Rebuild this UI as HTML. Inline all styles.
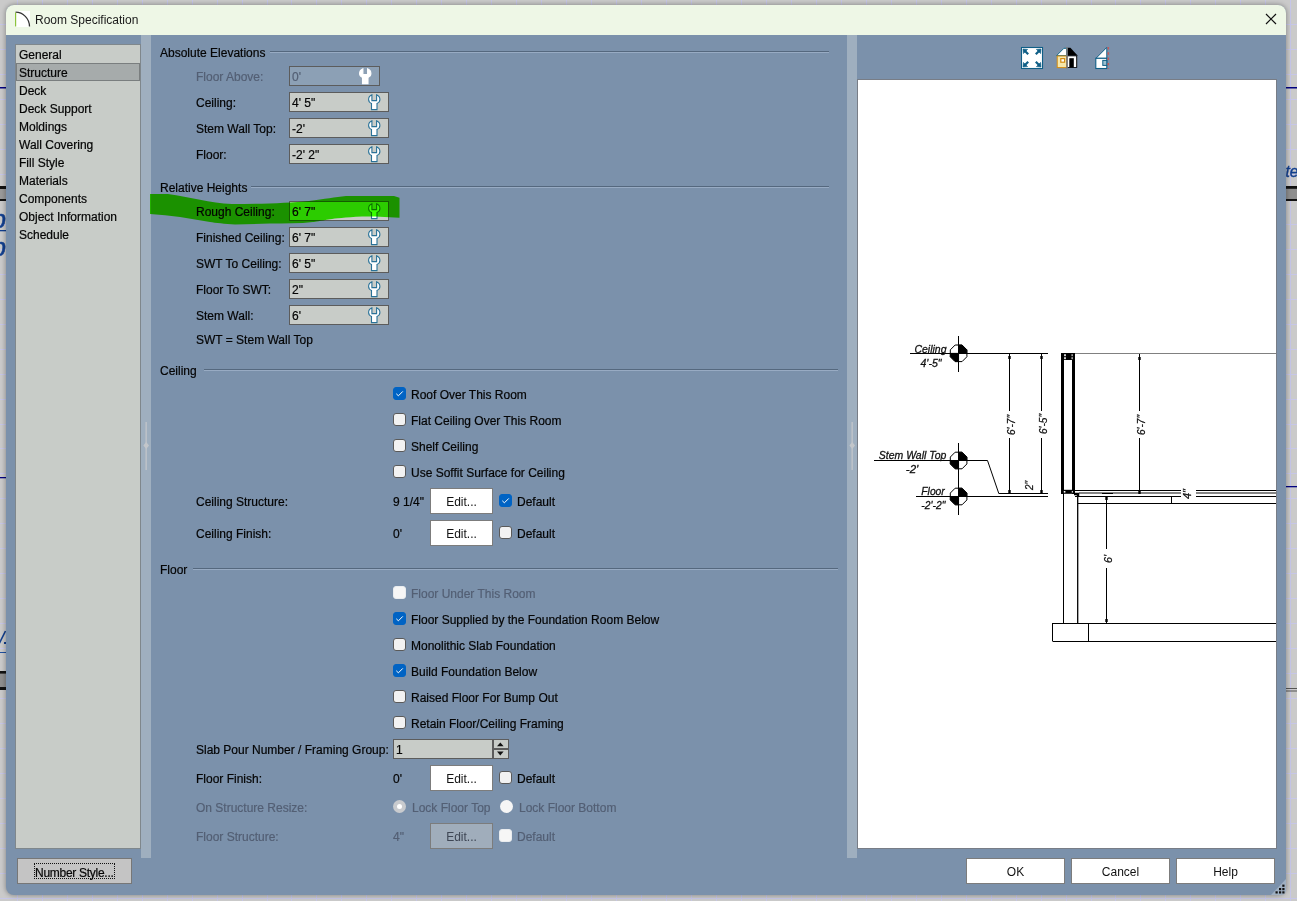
<!DOCTYPE html><html><head><meta charset="utf-8"><style>
*{box-sizing:border-box;margin:0;padding:0}
html,body{width:1297px;height:901px;overflow:hidden;background:#cacaca;font-family:"Liberation Sans",sans-serif;font-size:12px;color:#111}
.a{position:absolute}
.t{position:absolute;white-space:nowrap;line-height:14px;font-size:12px;color:#050505;-webkit-text-stroke:0.2px currentColor}
.dis{color:#535f74}
.win{position:absolute;left:6px;top:5px;width:1280px;height:890px;border-radius:8px;background:#7b91ab;overflow:hidden;box-shadow:0 0 4px 1px rgba(0,0,0,.28)}
.title{position:absolute;left:0;top:0;width:1280px;height:30px;background:#eef7e6}
.list{position:absolute;left:15px;top:44px;width:126px;height:805px;background:#c8ccc8;border:1px solid #7f878c}
.sel{position:absolute;left:16px;top:63px;width:124px;height:18px;background:#a6abab;border:1px solid #7a7e7f}
.split{position:absolute;background:#9fafbf}
.gl{position:absolute;height:2px;border-top:1px solid #55687e;border-bottom:1px solid #98abc3}
.fld{position:absolute;height:20px;background:#c8ccc8;border:1px solid #5c5c5c}
.fld.d{background:#8ca0b5}
.btn{position:absolute;width:63px;height:26px;background:#fff;border:1px solid #7c7c7c;text-align:center;line-height:23px;padding-top:2px;color:#121212}
.btn.d{background:#a0adbb;color:#3e4654}
.cb{position:absolute;width:13px;height:13px;border-radius:3px;background:#f2f2f2;border:1px solid #5a5a5a}
.cb.on{background:#0063c4;border-color:#0063c4}
.cb.dd{border-color:#e9ecef;background:#f6f6f6}
.bb{position:absolute;height:26px;background:#fff;border:1px solid #7c7c7c;text-align:center;line-height:23px;padding-top:2px;color:#121212}
</style></head><body>
<svg class="a" style="left:0;top:0" width="1297" height="901"><g fill="#c6c6e8" shape-rendering="crispEdges"><rect x="17" y="0" width="1" height="901"/><rect x="42" y="0" width="1" height="901"/><rect x="67" y="0" width="1" height="901"/><rect x="92" y="0" width="1" height="901"/><rect x="117" y="0" width="1" height="901"/><rect x="142" y="0" width="1" height="901"/><rect x="167" y="0" width="1" height="901"/><rect x="192" y="0" width="1" height="901"/><rect x="217" y="0" width="1" height="901"/><rect x="242" y="0" width="1" height="901"/><rect x="267" y="0" width="1" height="901"/><rect x="291" y="0" width="1" height="901"/><rect x="316" y="0" width="1" height="901"/><rect x="341" y="0" width="1" height="901"/><rect x="366" y="0" width="1" height="901"/><rect x="391" y="0" width="1" height="901"/><rect x="416" y="0" width="1" height="901"/><rect x="441" y="0" width="1" height="901"/><rect x="466" y="0" width="1" height="901"/><rect x="491" y="0" width="1" height="901"/><rect x="516" y="0" width="1" height="901"/><rect x="541" y="0" width="1" height="901"/><rect x="566" y="0" width="1" height="901"/><rect x="591" y="0" width="1" height="901"/><rect x="616" y="0" width="1" height="901"/><rect x="641" y="0" width="1" height="901"/><rect x="666" y="0" width="1" height="901"/><rect x="691" y="0" width="1" height="901"/><rect x="716" y="0" width="1" height="901"/><rect x="741" y="0" width="1" height="901"/><rect x="766" y="0" width="1" height="901"/><rect x="791" y="0" width="1" height="901"/><rect x="816" y="0" width="1" height="901"/><rect x="841" y="0" width="1" height="901"/><rect x="866" y="0" width="1" height="901"/><rect x="891" y="0" width="1" height="901"/><rect x="916" y="0" width="1" height="901"/><rect x="941" y="0" width="1" height="901"/><rect x="966" y="0" width="1" height="901"/><rect x="991" y="0" width="1" height="901"/><rect x="1016" y="0" width="1" height="901"/><rect x="1041" y="0" width="1" height="901"/><rect x="1066" y="0" width="1" height="901"/><rect x="1091" y="0" width="1" height="901"/><rect x="1115" y="0" width="1" height="901"/><rect x="1140" y="0" width="1" height="901"/><rect x="1165" y="0" width="1" height="901"/><rect x="1190" y="0" width="1" height="901"/><rect x="1215" y="0" width="1" height="901"/><rect x="1240" y="0" width="1" height="901"/><rect x="1265" y="0" width="1" height="901"/><rect x="1290" y="0" width="1" height="901"/><rect x="0" y="24" width="1297" height="1"/><rect x="0" y="49" width="1297" height="1"/><rect x="0" y="74" width="1297" height="1"/><rect x="0" y="99" width="1297" height="1"/><rect x="0" y="124" width="1297" height="1"/><rect x="0" y="149" width="1297" height="1"/><rect x="0" y="174" width="1297" height="1"/><rect x="0" y="199" width="1297" height="1"/><rect x="0" y="224" width="1297" height="1"/><rect x="0" y="249" width="1297" height="1"/><rect x="0" y="274" width="1297" height="1"/><rect x="0" y="299" width="1297" height="1"/><rect x="0" y="324" width="1297" height="1"/><rect x="0" y="349" width="1297" height="1"/><rect x="0" y="374" width="1297" height="1"/><rect x="0" y="399" width="1297" height="1"/><rect x="0" y="424" width="1297" height="1"/><rect x="0" y="448" width="1297" height="1"/><rect x="0" y="473" width="1297" height="1"/><rect x="0" y="498" width="1297" height="1"/><rect x="0" y="523" width="1297" height="1"/><rect x="0" y="548" width="1297" height="1"/><rect x="0" y="573" width="1297" height="1"/><rect x="0" y="598" width="1297" height="1"/><rect x="0" y="623" width="1297" height="1"/><rect x="0" y="648" width="1297" height="1"/><rect x="0" y="673" width="1297" height="1"/><rect x="0" y="698" width="1297" height="1"/><rect x="0" y="723" width="1297" height="1"/><rect x="0" y="748" width="1297" height="1"/><rect x="0" y="773" width="1297" height="1"/><rect x="0" y="798" width="1297" height="1"/><rect x="0" y="823" width="1297" height="1"/><rect x="0" y="848" width="1297" height="1"/><rect x="0" y="873" width="1297" height="1"/><rect x="0" y="898" width="1297" height="1"/><rect x="0" y="923" width="1297" height="1"/></g>
<rect x="0" y="186" width="8" height="15" fill="#9a9a9a"/><rect x="0" y="186" width="8" height="3" fill="#111"/><rect x="0" y="199" width="8" height="2" fill="#111"/>
<rect x="0" y="671" width="8" height="19" fill="#8e8e8e"/><rect x="0" y="671" width="8" height="2.6" fill="#111"/><rect x="0" y="687" width="8" height="3" fill="#111"/>
<rect x="0" y="87" width="8" height="1.5" fill="#000080"/><rect x="0" y="477" width="8" height="1.3" fill="#000080"/><rect x="0" y="230" width="8" height="1.3" fill="#123f8f"/><rect x="0" y="652" width="8" height="1" fill="#2050a0"/>
<text x="-8" y="227.5" font-family="Liberation Sans" font-style="italic" font-size="25" fill="#123f8f" stroke="#123f8f" stroke-width="0.6">b</text>
<text x="-8" y="255.5" font-family="Liberation Sans" font-style="italic" font-size="25" fill="#123f8f" stroke="#123f8f" stroke-width="0.6">b</text>
<path d="M-1 644 L5.5 631" stroke="#123f8f" stroke-width="1.6"/><rect x="4" y="642" width="2" height="2" fill="#123f8f"/>
<rect x="1280" y="186" width="17" height="15" fill="#8e8e8e"/><rect x="1280" y="186" width="17" height="2.8" fill="#111"/><rect x="1280" y="199" width="17" height="2" fill="#111"/>
<rect x="1280" y="87" width="17" height="1.5" fill="#000080"/><rect x="1280" y="486" width="17" height="1.3" fill="#000080"/>
<rect x="1280" y="688" width="17" height="1" fill="#555"/><rect x="1280" y="690.5" width="17" height="1" fill="#555"/>
<text x="1285.5" y="177" font-family="Liberation Sans" font-style="italic" font-size="16" fill="#123f8f" stroke="#123f8f" stroke-width="0.4" textLength="13" lengthAdjust="spacingAndGlyphs">te</text>
</svg>
<div class="win"><div class="title"></div></div>
<svg class="a" style="left:15px;top:11px" width="16" height="17"><rect x="0" y="0" width="15" height="16" fill="#fff"/><path d="M0.5 1.2 A14 14.5 0 0 1 14.5 15.5" fill="none" stroke="#333" stroke-width="1.3"/><rect x="0" y="1.5" width="1.2" height="14" fill="#8cc43c"/></svg>
<div class="t" style="left:35px;top:13px;color:#1a1a1a;-webkit-text-stroke:0">Room Specification</div>
<svg class="a" style="left:1265px;top:13px" width="12" height="12"><path d="M1 1L11 11M11 1L1 11" stroke="#111" stroke-width="1.2"/></svg>
<div class="list"></div><div class="sel"></div>
<div class="t" style="left:19px;top:48px">General</div>
<div class="t" style="left:19px;top:66px">Structure</div>
<div class="t" style="left:19px;top:84px">Deck</div>
<div class="t" style="left:19px;top:102px">Deck Support</div>
<div class="t" style="left:19px;top:120px">Moldings</div>
<div class="t" style="left:19px;top:138px">Wall Covering</div>
<div class="t" style="left:19px;top:156px">Fill Style</div>
<div class="t" style="left:19px;top:174px">Materials</div>
<div class="t" style="left:19px;top:192px">Components</div>
<div class="t" style="left:19px;top:210px">Object Information</div>
<div class="t" style="left:19px;top:228px">Schedule</div>
<div class="split" style="left:141px;top:35px;width:10px;height:823px"></div>
<div class="split" style="left:847px;top:35px;width:10px;height:823px"></div>
<svg class="a" style="left:143px;top:421px" width="7" height="50"><rect x="2.5" y="1" width="1.3" height="48" fill="#c3c6ca"/><path d="M3.2 21L6 24.5L3.2 28L0.4 24.5Z" fill="#c3c6ca"/></svg>
<svg class="a" style="left:849px;top:421px" width="7" height="50"><rect x="2.5" y="1" width="1.3" height="48" fill="#c3c6ca"/><path d="M3.2 21L6 24.5L3.2 28L0.4 24.5Z" fill="#c3c6ca"/></svg>
<div class="t" style="left:160px;top:46px">Absolute Elevations</div>
<div class="gl" style="left:270px;top:51px;width:559px"></div>
<div class="t" style="left:160px;top:181px">Relative Heights</div>
<div class="gl" style="left:251px;top:186px;width:578px"></div>
<div class="t" style="left:160px;top:364px">Ceiling</div>
<div class="gl" style="left:204px;top:369px;width:634px"></div>
<div class="t" style="left:160px;top:563px">Floor</div>
<div class="gl" style="left:193px;top:568px;width:645px"></div>
<div class="t dis" style="left:196px;top:70px">Floor Above:</div>
<div class="fld d" style="left:289px;top:66px;width:91px"></div>
<div class="t dis" style="left:292px;top:70px">0'</div>
<svg class="a" style="left:359px;top:68px" width="13" height="17"><path d="M3.9 0.8 C1.4 1.8 0.6 3.8 0.6 5.6 C0.6 7.6 1.8 8.8 3.5 9.4 L3.5 15.6 L9 15.6 L9 9.4 C10.7 8.8 11.9 7.6 11.9 5.6 C11.9 3.8 11.1 1.8 8.6 0.8 L8.6 6.6 L3.9 6.6 Z" fill="#fff" stroke="#ffffff" stroke-width="1.1"/></svg>
<div class="t" style="left:196px;top:96px">Ceiling:</div>
<div class="fld" style="left:289px;top:92px;width:100px"></div>
<div class="t" style="left:292px;top:96px">4' 5"</div>
<svg class="a" style="left:368px;top:94px" width="13" height="17"><path d="M3.9 0.8 C1.4 1.8 0.6 3.8 0.6 5.6 C0.6 7.6 1.8 8.8 3.5 9.4 L3.5 15.6 L9 15.6 L9 9.4 C10.7 8.8 11.9 7.6 11.9 5.6 C11.9 3.8 11.1 1.8 8.6 0.8 L8.6 6.6 L3.9 6.6 Z" fill="#fff" stroke="#2a7298" stroke-width="1.1"/></svg>
<div class="t" style="left:196px;top:122px">Stem Wall Top:</div>
<div class="fld" style="left:289px;top:118px;width:100px"></div>
<div class="t" style="left:292px;top:122px">-2'</div>
<svg class="a" style="left:368px;top:120px" width="13" height="17"><path d="M3.9 0.8 C1.4 1.8 0.6 3.8 0.6 5.6 C0.6 7.6 1.8 8.8 3.5 9.4 L3.5 15.6 L9 15.6 L9 9.4 C10.7 8.8 11.9 7.6 11.9 5.6 C11.9 3.8 11.1 1.8 8.6 0.8 L8.6 6.6 L3.9 6.6 Z" fill="#fff" stroke="#2a7298" stroke-width="1.1"/></svg>
<div class="t" style="left:196px;top:148px">Floor:</div>
<div class="fld" style="left:289px;top:144px;width:100px"></div>
<div class="t" style="left:292px;top:148px">-2' 2"</div>
<svg class="a" style="left:368px;top:146px" width="13" height="17"><path d="M3.9 0.8 C1.4 1.8 0.6 3.8 0.6 5.6 C0.6 7.6 1.8 8.8 3.5 9.4 L3.5 15.6 L9 15.6 L9 9.4 C10.7 8.8 11.9 7.6 11.9 5.6 C11.9 3.8 11.1 1.8 8.6 0.8 L8.6 6.6 L3.9 6.6 Z" fill="#fff" stroke="#2a7298" stroke-width="1.1"/></svg>
<div class="t" style="left:196px;top:205px">Rough Ceiling:</div>
<div class="fld" style="left:289px;top:201px;width:100px"></div>
<div class="t" style="left:292px;top:205px">6' 7"</div>
<svg class="a" style="left:368px;top:203px" width="13" height="17"><path d="M3.9 0.8 C1.4 1.8 0.6 3.8 0.6 5.6 C0.6 7.6 1.8 8.8 3.5 9.4 L3.5 15.6 L9 15.6 L9 9.4 C10.7 8.8 11.9 7.6 11.9 5.6 C11.9 3.8 11.1 1.8 8.6 0.8 L8.6 6.6 L3.9 6.6 Z" fill="#fff" stroke="#2a7298" stroke-width="1.1"/></svg>
<div class="t" style="left:196px;top:231px">Finished Ceiling:</div>
<div class="fld" style="left:289px;top:227px;width:100px"></div>
<div class="t" style="left:292px;top:231px">6' 7"</div>
<svg class="a" style="left:368px;top:229px" width="13" height="17"><path d="M3.9 0.8 C1.4 1.8 0.6 3.8 0.6 5.6 C0.6 7.6 1.8 8.8 3.5 9.4 L3.5 15.6 L9 15.6 L9 9.4 C10.7 8.8 11.9 7.6 11.9 5.6 C11.9 3.8 11.1 1.8 8.6 0.8 L8.6 6.6 L3.9 6.6 Z" fill="#fff" stroke="#2a7298" stroke-width="1.1"/></svg>
<div class="t" style="left:196px;top:257px">SWT To Ceiling:</div>
<div class="fld" style="left:289px;top:253px;width:100px"></div>
<div class="t" style="left:292px;top:257px">6' 5"</div>
<svg class="a" style="left:368px;top:255px" width="13" height="17"><path d="M3.9 0.8 C1.4 1.8 0.6 3.8 0.6 5.6 C0.6 7.6 1.8 8.8 3.5 9.4 L3.5 15.6 L9 15.6 L9 9.4 C10.7 8.8 11.9 7.6 11.9 5.6 C11.9 3.8 11.1 1.8 8.6 0.8 L8.6 6.6 L3.9 6.6 Z" fill="#fff" stroke="#2a7298" stroke-width="1.1"/></svg>
<div class="t" style="left:196px;top:283px">Floor To SWT:</div>
<div class="fld" style="left:289px;top:279px;width:100px"></div>
<div class="t" style="left:292px;top:283px">2"</div>
<svg class="a" style="left:368px;top:281px" width="13" height="17"><path d="M3.9 0.8 C1.4 1.8 0.6 3.8 0.6 5.6 C0.6 7.6 1.8 8.8 3.5 9.4 L3.5 15.6 L9 15.6 L9 9.4 C10.7 8.8 11.9 7.6 11.9 5.6 C11.9 3.8 11.1 1.8 8.6 0.8 L8.6 6.6 L3.9 6.6 Z" fill="#fff" stroke="#2a7298" stroke-width="1.1"/></svg>
<div class="t" style="left:196px;top:309px">Stem Wall:</div>
<div class="fld" style="left:289px;top:305px;width:100px"></div>
<div class="t" style="left:292px;top:309px">6'</div>
<svg class="a" style="left:368px;top:307px" width="13" height="17"><path d="M3.9 0.8 C1.4 1.8 0.6 3.8 0.6 5.6 C0.6 7.6 1.8 8.8 3.5 9.4 L3.5 15.6 L9 15.6 L9 9.4 C10.7 8.8 11.9 7.6 11.9 5.6 C11.9 3.8 11.1 1.8 8.6 0.8 L8.6 6.6 L3.9 6.6 Z" fill="#fff" stroke="#2a7298" stroke-width="1.1"/></svg>
<div class="t" style="left:196px;top:333px">SWT = Stem Wall Top</div>
<div class="cb on" style="left:393px;top:387px"></div>
<svg class="a" style="left:393px;top:387px" width="13" height="13"><path d="M3.3 6.8L5.4 8.8L9.8 4.4" fill="none" stroke="#fff" stroke-width="1"/></svg>
<div class="t" style="left:411px;top:388px">Roof Over This Room</div>
<div class="cb" style="left:393px;top:413px"></div>
<div class="t" style="left:411px;top:414px">Flat Ceiling Over This Room</div>
<div class="cb" style="left:393px;top:439px"></div>
<div class="t" style="left:411px;top:440px">Shelf Ceiling</div>
<div class="cb" style="left:393px;top:465px"></div>
<div class="t" style="left:411px;top:466px">Use Soffit Surface for Ceiling</div>
<div class="t" style="left:196px;top:495px">Ceiling Structure:</div>
<div class="t" style="left:393px;top:495px">9 1/4"</div>
<div class="btn" style="left:430px;top:488px">Edit...</div>
<div class="cb on" style="left:499px;top:494px"></div>
<svg class="a" style="left:499px;top:494px" width="13" height="13"><path d="M3.3 6.8L5.4 8.8L9.8 4.4" fill="none" stroke="#fff" stroke-width="1"/></svg>
<div class="t" style="left:517px;top:495px">Default</div>
<div class="t" style="left:196px;top:527px">Ceiling Finish:</div>
<div class="t" style="left:393px;top:527px">0'</div>
<div class="btn" style="left:430px;top:520px">Edit...</div>
<div class="cb" style="left:499px;top:526px"></div>
<div class="t" style="left:517px;top:527px">Default</div>
<div class="cb dd" style="left:393px;top:586px"></div>
<div class="t dis" style="left:411px;top:587px">Floor Under This Room</div>
<div class="cb on" style="left:393px;top:612px"></div>
<svg class="a" style="left:393px;top:612px" width="13" height="13"><path d="M3.3 6.8L5.4 8.8L9.8 4.4" fill="none" stroke="#fff" stroke-width="1"/></svg>
<div class="t" style="left:411px;top:613px">Floor Supplied by the Foundation Room Below</div>
<div class="cb" style="left:393px;top:638px"></div>
<div class="t" style="left:411px;top:639px">Monolithic Slab Foundation</div>
<div class="cb on" style="left:393px;top:664px"></div>
<svg class="a" style="left:393px;top:664px" width="13" height="13"><path d="M3.3 6.8L5.4 8.8L9.8 4.4" fill="none" stroke="#fff" stroke-width="1"/></svg>
<div class="t" style="left:411px;top:665px">Build Foundation Below</div>
<div class="cb" style="left:393px;top:690px"></div>
<div class="t" style="left:411px;top:691px">Raised Floor For Bump Out</div>
<div class="cb" style="left:393px;top:716px"></div>
<div class="t" style="left:411px;top:717px">Retain Floor/Ceiling Framing</div>
<div class="t" style="left:196px;top:743px">Slab Pour Number / Framing Group:</div>
<div class="fld" style="left:393px;top:739px;width:116px"></div>
<div class="t" style="left:396px;top:743px">1</div>
<div class="a" style="left:492px;top:740px;width:2px;height:18px;background:#5c5c5c"></div>
<div class="a" style="left:494px;top:748px;width:14px;height:2px;background:#5c5c5c"></div>
<svg class="a" style="left:494px;top:740px" width="14" height="18"><path d="M3 6.2L6.3 2.6L9.6 6.2Z" fill="#111"/><path d="M3 11.6L6.3 15.4L9.6 11.6Z" fill="#111"/></svg>
<div class="t" style="left:196px;top:772px">Floor Finish:</div>
<div class="t" style="left:393px;top:772px">0'</div>
<div class="btn" style="left:430px;top:765px">Edit...</div>
<div class="cb" style="left:499px;top:771px"></div>
<div class="t" style="left:517px;top:772px">Default</div>
<div class="t dis" style="left:196px;top:801px">On Structure Resize:</div>
<div class="a" style="left:393px;top:800px;width:13px;height:13px;border-radius:50%;background:#c9cbce"></div><div class="a" style="left:397px;top:804px;width:5px;height:5px;border-radius:50%;background:#fff"></div>
<div class="t dis" style="left:412px;top:801px">Lock Floor Top</div>
<div class="a" style="left:500px;top:800px;width:13px;height:13px;border-radius:50%;background:#f6f6f6"></div>
<div class="t dis" style="left:519px;top:801px">Lock Floor Bottom</div>
<div class="t dis" style="left:196px;top:830px">Floor Structure:</div>
<div class="t dis" style="left:393px;top:830px">4"</div>
<div class="btn d" style="left:430px;top:823px">Edit...</div>
<div class="cb dd" style="left:499px;top:829px"></div>
<div class="t dis" style="left:517px;top:830px">Default</div>
<div class="a" style="left:17px;top:858px;width:115px;height:26px;background:#c4c4c4;border:1px solid #777"></div>
<div class="a" style="left:34px;top:863px;width:81px;height:16px;border:1px dotted #111"></div>
<div class="t" style="left:35px;top:866px;letter-spacing:-0.28px">Number Style...</div>
<div class="bb" style="left:966px;top:858px;width:99px">OK</div>
<div class="bb" style="left:1071px;top:858px;width:99px">Cancel</div>
<div class="bb" style="left:1176px;top:858px;width:99px">Help</div>
<svg class="a" style="left:1270px;top:879px" width="16" height="16"><path d="M16 0L16 11Q16 16 11 16L1 16Z" fill="#9fb0c2"/><g fill="#111"><rect x="12.3" y="5.6" width="2.2" height="2.2"/><rect x="9" y="9" width="2.2" height="2.2"/><rect x="12.3" y="9" width="2.2" height="2.2"/><rect x="5.5" y="12.3" width="2.2" height="2.2"/><rect x="9" y="12.3" width="2.2" height="2.2"/><rect x="12.3" y="12.3" width="2.2" height="2.2"/></g></svg>
<div class="a" style="left:857px;top:79px;width:420px;height:770px;background:#fff;border:1px solid #787d86"></div>
<svg class="a" style="left:0;top:0" width="1297" height="901" font-family="Liberation Sans">
<!-- toolbar icon 1 -->
<g transform="translate(1021,47)">
<rect x="0.5" y="0.5" width="21" height="21" fill="#fff" stroke="#0f5e86" stroke-width="1.1"/>
<g fill="#0f5e86" stroke="#0f5e86">
<path d="M2 2 L6.6 2.4 L2.4 6.6 Z" stroke-width="0.6"/><path d="M3.5 3.5 L7.2 7.2" stroke-width="2.2"/>
<path d="M20 2 L15.4 2.4 L19.6 6.6 Z" stroke-width="0.6"/><path d="M18.5 3.5 L14.8 7.2" stroke-width="2.2"/>
<path d="M2 20 L6.6 19.6 L2.4 15.4 Z" stroke-width="0.6"/><path d="M3.5 18.5 L7.2 14.8" stroke-width="2.2"/>
<path d="M20 20 L15.4 19.6 L19.6 15.4 Z" stroke-width="0.6"/><path d="M18.5 18.5 L14.8 14.8" stroke-width="2.2"/>
</g></g>
<!-- toolbar icon 2 house -->
<g transform="translate(1053,44)">
<path d="M3.6 11.6 L10.9 4.3 L13.6 4.3 L13.6 11.6 Z" fill="#fff" stroke="#136a8c" stroke-width="1"/>
<rect x="4.2" y="12" width="9.3" height="11.6" fill="#f6e7aa" stroke="#d38c12" stroke-width="1"/>
<rect x="7.8" y="14.6" width="3.8" height="3.6" fill="#fff" stroke="#d38c12" stroke-width="1.2"/>
<path d="M14.6 3.8 L17.4 3.8 L24.8 11.8 L14.6 11.8 Z" fill="#000"/>
<rect x="14.6" y="11.8" width="9.6" height="12" fill="#000"/>
<rect x="14.6" y="12.3" width="8.6" height="10.7" fill="#fff"/>
<rect x="16.3" y="14.2" width="4.5" height="9.3" fill="#000"/>
<rect x="13.2" y="3" width="1.5" height="21.5" fill="#7a7a7a"/>
</g>
<!-- toolbar icon 3 -->
<g transform="translate(1088,44)">
<path d="M8 14.3 L18.8 3.4 L18.8 14.3 Z" fill="#fff" stroke="#0f5e86" stroke-width="1"/>
<rect x="7.8" y="14.3" width="11" height="10.2" fill="#fff" stroke="#0f5e86" stroke-width="1.1"/>
<rect x="14.8" y="16.4" width="4" height="5" fill="#9cc0d0" stroke="#0f5e86" stroke-width="1"/>
<path d="M20.3 3 L20.3 25" stroke="#c45a5a" stroke-width="1.6" stroke-dasharray="2.4 2.9"/>
</g>

<path d="M1079 493 H1276" stroke="#858585" stroke-width="2"/>
<g stroke="#000" fill="none" stroke-width="1">
<!-- ceiling marker lines -->
<path d="M910 353.5 H1048"/>
<path d="M958.5 336 V372"/>
<path d="M874 460.5 H987.5 L998.8 493.5 H1048"/>
<path d="M916 496.5 H1048"/>
<path d="M958.5 443 V515"/>
<!-- dims -->
<path d="M1009.5 354 V411 M1009.5 438 V493"/>
<path d="M1041.5 354 V411 M1041.5 438 V493"/>
<path d="M1139.5 354 V411 M1139.5 438 V493"/>
<path d="M1135 353.5 H1145"/>
<path d="M1106.5 496 V549 M1106.5 568 V623"/>
<path d="M1102 493.5 H1113 M1102 623.5 H1113"/>
<!-- wall -->
<path d="M1062.5 353 V494" stroke-width="3"/>
<path d="M1073.5 353 V494" stroke-width="3"/>
<path d="M1061 356.5 H1075" stroke-width="7"/>
<path d="M1061 491.8 H1075" stroke-width="4"/>
<path d="M1074 494 H1078 V497" stroke-width="2.5"/>
<!-- floor -->
<path d="M1075 490.5 H1276" stroke-width="1.1"/>
<path d="M1075 496.5 H1276"/>
<path d="M1078 503.5 H1276"/>
<path d="M1171.5 496 V504"/>
<!-- stem wall -->
<path d="M1063.5 494 V623"/>
<path d="M1077.7 497 V623" stroke-width="1.3"/>
<path d="M1052.5 623.5 H1276 M1052.5 641.5 H1276 M1052.5 623 V641 M1088.5 623 V641"/>
</g>
<path d="M1075 353.5 H1276" stroke="#808080" stroke-width="1.2"/>
<!-- marker circles -->
<g id="mk">
<path d="M955.15 345 L962.05 345 L966.9 349.85 L966.9 356.75 L962.05 361.6 L955.15 361.6 L950.3 356.75 L950.3 349.85 Z" fill="none" stroke="#000" stroke-width="1"/>
<path d="M958.6 353.3 L958.6 345 L962.05 345 L966.9 349.85 L966.9 353.3 Z" fill="#000" stroke="#000" stroke-width="0.6"/>
<path d="M958.6 353.3 L958.6 361.6 L955.15 361.6 L950.3 356.75 L950.3 353.3 Z" fill="#000" stroke="#000" stroke-width="0.6"/>
</g>
<use href="#mk" transform="translate(0,107.2)"/>
<use href="#mk" transform="translate(0,143.2)"/>
<!-- arrow dots -->
<g fill="#000">
<rect x="1008.3" y="356" width="2.4" height="3"/><rect x="1040.3" y="356" width="2.4" height="3"/><rect x="1138.3" y="357" width="2.4" height="3"/>
<rect x="1008.3" y="490" width="2.4" height="3"/><rect x="1040.3" y="490" width="2.4" height="3"/><rect x="1138.3" y="491" width="2.4" height="3"/>
<rect x="1105.3" y="497" width="2.4" height="3"/><rect x="1105.3" y="619" width="2.4" height="3"/>
</g>
<g fill="#fff"><rect x="1064.2" y="354.2" width="1.6" height="2"/><rect x="1064.2" y="357.2" width="1.6" height="2"/><rect x="1071.6" y="354.2" width="1" height="2"/><rect x="1071.6" y="357.2" width="1" height="2"/><rect x="1063.8" y="491" width="1.6" height="1.6"/><rect x="1071.8" y="491" width="1" height="1.6"/></g>
<!-- labels -->
<g font-style="italic" font-size="11.5" fill="#111" stroke="#111" stroke-width="0.3">
<text x="914.5" y="352.5" textLength="32" lengthAdjust="spacingAndGlyphs">Ceiling</text>
<text x="920.5" y="366.8" textLength="21" lengthAdjust="spacingAndGlyphs">4'-5"</text>
<text x="878.8" y="459" textLength="67.5" lengthAdjust="spacingAndGlyphs">Stem Wall Top</text>
<text x="905.8" y="473" textLength="12.5" lengthAdjust="spacingAndGlyphs">-2'</text>
<text x="921.3" y="494.6" textLength="23.5" lengthAdjust="spacingAndGlyphs">Floor</text>
<text x="921.3" y="509" textLength="24" lengthAdjust="spacingAndGlyphs">-2'-2"</text>
</g>
<g font-size="11.5" font-style="italic" fill="#111" stroke="#111" stroke-width="0.25">
<text transform="translate(1014.5,435) rotate(-90)" textLength="20" lengthAdjust="spacingAndGlyphs">6'-7"</text>
<text transform="translate(1046.5,434) rotate(-90)" textLength="20" lengthAdjust="spacingAndGlyphs">6'-5"</text>
<text transform="translate(1144.5,435) rotate(-90)" textLength="20" lengthAdjust="spacingAndGlyphs">6'-7"</text>
<text transform="translate(1033,490) rotate(-90)" textLength="9" lengthAdjust="spacingAndGlyphs">2"</text>
<text transform="translate(1111.5,563) rotate(-90)" textLength="8" lengthAdjust="spacingAndGlyphs">6'</text>
</g>
<rect x="1181" y="489" width="15" height="8" fill="#fff"/>
<text transform="translate(1190.8,499) rotate(-90)" font-size="11.5" font-style="italic" stroke="#111" stroke-width="0.25" fill="#111" textLength="10" lengthAdjust="spacingAndGlyphs">4"</text>
</svg>

<svg class="a" style="left:0;top:0;mix-blend-mode:multiply" width="1297" height="901"><path d="M150 194 L168 194 C190 197 210 203 232 204 C260 204 290 203 309 201 C325 199 335 197 346 196 L394 196 L399.5 197.7 L399.5 217.7 C385 217 370 216.5 362 216.6 C345 217.5 335 218.5 330 219.3 C320 221 315 222 313 222 C300 223.5 285 223.6 270 223.6 L235 224.6 C225 224 215 222.8 210 222 C190 218.5 170 215 150 214 Z" fill="#38ff00"/></svg>
</body></html>
